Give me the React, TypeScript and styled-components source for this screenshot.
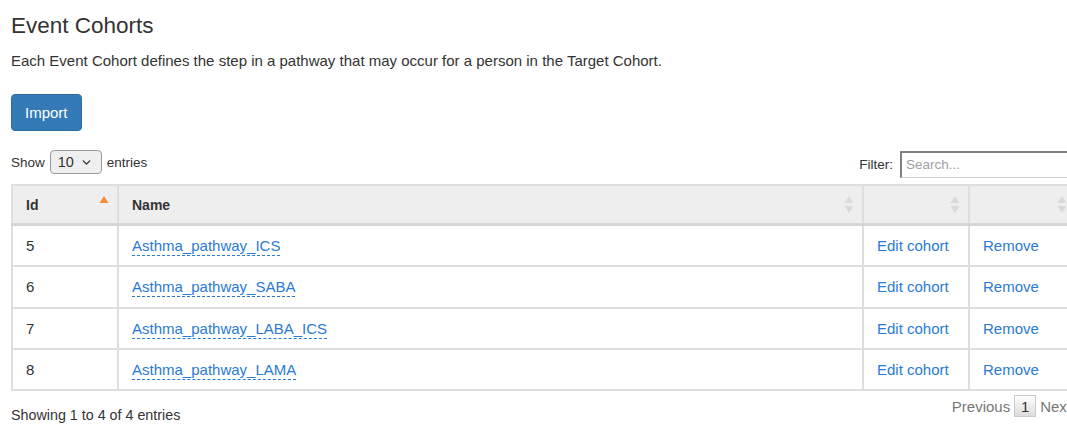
import React from "react";
import styled, { createGlobalStyle } from "styled-components";
import { ChevronDown } from "lucide-react";

const GlobalStyle = createGlobalStyle`
  html, body {
    margin: 0;
    padding: 0;
    background: #fff;
    overflow: hidden;
  }
  body {
    font-family: "Liberation Sans", Arial, sans-serif;
    color: #333;
  }
`;

interface Cohort {
  id: number;
  name: string;
}

const cohorts: Cohort[] = [
  { id: 5, name: "Asthma_pathway_ICS" },
  { id: 6, name: "Asthma_pathway_SABA" },
  { id: 7, name: "Asthma_pathway_LABA_ICS" },
  { id: 8, name: "Asthma_pathway_LAMA" },
];

const SortIcon: React.FC<{ active?: boolean }> = ({ active }) => (
  <SortMark width="10" height="19" viewBox="0 0 10 19">
    {active ? (
      <path d="M5 1 L9.5 8 L0.5 8 Z" fill="#f5893c" />
    ) : (
      <>
        <path d="M5 1 L9.5 8 L0.5 8 Z" fill="#dadada" />
        <path d="M5 18 L9.5 11 L0.5 11 Z" fill="#dadada" />
      </>
    )}
  </SortMark>
);

const App: React.FC = () => {
  return (
    <Page>
      <GlobalStyle />
      <Title>Event Cohorts</Title>
      <Description>
        Each Event Cohort defines the step in a pathway that may occur for a
        person in the Target Cohort.
      </Description>
      <ImportButton>Import</ImportButton>

      <Controls>
        <Length>
          Show
          <SelectBox>
            <span>10</span>
            <ChevronDown size={13} strokeWidth={2.6} color="#333" />
          </SelectBox>
          entries
        </Length>
        <FilterArea>
          Filter:
          <SearchInput placeholder="Search..." />
        </FilterArea>
      </Controls>

      <Table>
        <colgroup>
          <col style={{ width: 106 }} />
          <col style={{ width: 745 }} />
          <col style={{ width: 106 }} />
          <col style={{ width: 107 }} />
        </colgroup>
        <thead>
          <tr>
            <HeadCell>
              Id
              <SortIcon active />
            </HeadCell>
            <HeadCell>
              Name
              <SortIcon />
            </HeadCell>
            <HeadCell>
              <SortIcon />
            </HeadCell>
            <HeadCell>
              <SortIcon />
            </HeadCell>
          </tr>
        </thead>
        <tbody>
          {cohorts.map((c) => (
            <tr key={c.id}>
              <Cell>{c.id}</Cell>
              <Cell>
                <NameLink>{c.name}</NameLink>
              </Cell>
              <Cell>
                <ActionLink>Edit cohort</ActionLink>
              </Cell>
              <Cell>
                <ActionLink>Remove</ActionLink>
              </Cell>
            </tr>
          ))}
        </tbody>
      </Table>

      <Footer>
        <Info>Showing 1 to 4 of 4 entries</Info>
        <Paging>
          <PageText>Previous</PageText>
          <PageButton>1</PageButton>
          <PageText>Next</PageText>
        </Paging>
      </Footer>
    </Page>
  );
};

export default App;

const Page = styled.div`
  width: 1064px;
  padding: 0 0 0 11px;
`;

const Title = styled.h1`
  margin: 0;
  padding-top: 13px;
  font-size: 22.5px;
  font-weight: 400;
  line-height: 26px;
  color: #333;
`;

const Description = styled.p`
  margin: 12px 0 0;
  font-size: 15px;
  line-height: 20px;
  color: #333;
`;

const ImportButton = styled.button`
  display: block;
  margin-top: 23px;
  height: 37px;
  padding: 0 13px;
  font-family: "Liberation Sans", Arial, sans-serif;
  font-size: 15px;
  color: #fff;
  background: #337ab7;
  border: 1px solid #2e6da4;
  border-radius: 4px;
`;

const Controls = styled.div`
  display: flex;
  align-items: center;
  justify-content: space-between;
  margin-top: 20px;
  height: 26px;
`;

const Length = styled.label`
  display: flex;
  align-items: center;
  gap: 5px;
  font-size: 13.5px;
  color: #333;
  margin-top: -4px;
`;

const SelectBox = styled.span`
  display: inline-flex;
  align-items: center;
  justify-content: space-between;
  box-sizing: border-box;
  width: 52px;
  height: 24px;
  padding: 0 8px 0 7px;
  font-size: 14.5px;
  color: #333;
  background: #efefef;
  border: 1px solid #9a9a9a;
  border-radius: 4px;
`;

const FilterArea = styled.label`
  display: flex;
  align-items: center;
  gap: 7px;
  font-size: 13.5px;
  color: #333;
`;

const SearchInput = styled.input`
  box-sizing: border-box;
  width: 175px;
  height: 27px;
  padding: 0 4px;
  font-family: "Liberation Sans", Arial, sans-serif;
  font-size: 13.5px;
  color: #333;
  border-top: 2px solid #808080;
  border-left: 2px solid #808080;
  border-right: 1px solid #d0d0d0;
  border-bottom: 1px solid #d0d0d0;
  outline: none;

  &::placeholder {
    color: #a0a0a0;
  }
`;

const Table = styled.table`
  margin-top: 7px;
  width: 1064px;
  table-layout: fixed;
  border-collapse: collapse;
  border: 2px solid #dedede;
`;

const HeadCell = styled.th`
  position: relative;
  height: 37px;
  padding: 0 13px;
  text-align: left;
  font-size: 14px;
  font-weight: 700;
  color: #333;
  background: #eeeeee;
  border: 2px solid #dedede;
  border-bottom: 3px solid #d6d6d6;
`;

const SortMark = styled.svg`
  position: absolute;
  right: 8px;
  top: 50%;
  margin-top: -10px;
`;

const Cell = styled.td`
  height: 39.3px;
  padding: 0 13px;
  font-size: 15px;
  color: #333;
  border: 2px solid #dedede;
  vertical-align: middle;
`;

const NameLink = styled.a`
  color: #2a7ad6;
  text-decoration: none;
  border-bottom: 1px dashed #2a7ad6;
  padding-bottom: 1px;
`;

const ActionLink = styled.a`
  color: #2a7ad6;
  text-decoration: none;
`;

const Footer = styled.div`
  display: flex;
  justify-content: space-between;
  align-items: flex-start;
  margin-top: 4px;
`;

const Info = styled.div`
  padding-top: 12px;
  font-size: 14.3px;
  color: #333;
`;

const Paging = styled.div`
  display: flex;
  align-items: center;
  gap: 4px;
  margin-right: 4px;
`;

const PageText = styled.span`
  font-size: 15px;
  color: #777;
`;

const PageButton = styled.span`
  display: inline-flex;
  align-items: center;
  justify-content: center;
  box-sizing: border-box;
  width: 22px;
  height: 22px;
  font-size: 15px;
  color: #333;
  background: linear-gradient(#fff, #dcdcdc);
  border: 1px solid #cacaca;
`;
